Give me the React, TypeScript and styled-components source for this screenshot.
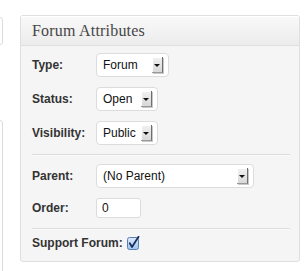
import React from "react";
import styled, { createGlobalStyle } from "styled-components";

const Global = createGlobalStyle`
  html, body { margin: 0; padding: 0; background: #ffffff; }
  body { font-family: "Liberation Sans", Arial, sans-serif; }
`;

const Page = styled.div`
  display: flex;
  align-items: flex-start;
  width: 308px;
  height: 271px;
  overflow: hidden;
`;

const SideCol = styled.div`
  width: 3px;
  display: flex;
  flex-direction: column;
  overflow: hidden;
  flex-shrink: 0;
`;

const SideBox = styled.div<{ $top: number; $height: number }>`
  margin-top: ${(p) => p.$top}px;
  height: ${(p) => p.$height}px;
  margin-left: -10px;
  background: #ffffff;
  border: 1px solid #dcdcdc;
  border-radius: 3px;
`;

const Panel = styled.div`
  margin-top: 15px;
  margin-left: 17px;
  width: 280px;
  box-sizing: border-box;
  border: 1px solid #dfdfdf;
  border-radius: 3px;
  background: #f5f5f5;
  overflow: hidden;
`;

const Header = styled.div`
  height: 29px;
  border-bottom: 1px solid #dfdfdf;
  background: linear-gradient(to bottom, #f9f9f9, #ececec);
  padding-left: 11px;
  font-family: "Liberation Serif", "Times New Roman", serif;
  font-size: 16px;
  letter-spacing: 0.2px;
  line-height: 29px;
  color: #464646;
  box-shadow: inset 0 1px 0 #ffffff;
`;

const Body = styled.div`
  padding: 7px 9px 0 11px;
`;

const Group = styled.div`
  display: flex;
  flex-direction: column;
  gap: 10px;
`;

const Divider = styled.div<{ $before: number; $after: number }>`
  height: 1px;
  background: #dcdcdc;
  margin-top: ${(p) => p.$before}px;
  margin-bottom: ${(p) => p.$after}px;
  box-shadow: 0 1px 0 #fbfbfb;
`;

const Row = styled.div`
  display: flex;
  align-items: center;
`;

const Label = styled.span<{ $width?: number }>`
  width: ${(p) => (p.$width ? `${p.$width}px` : "64px")};
  font-size: 12px;
  font-weight: bold;
  color: #333333;
  flex-shrink: 0;
`;

const SelectBox = styled.div<{ $width: number }>`
  width: ${(p) => p.$width}px;
  height: 24px;
  box-sizing: border-box;
  border: 1px solid #dcdcdc;
  border-radius: 4px;
  background: #ffffff;
  display: flex;
  align-items: center;
  justify-content: space-between;
  padding: 0 5px 0 6px;
  font-size: 12px;
  color: #111111;
`;

const ArrowButton = styled.span`
  width: 11px;
  height: 16px;
  box-sizing: border-box;
  background: linear-gradient(to bottom, #f2f2f2, #d8d8d8);
  border-right: 1px solid #6e6e6e;
  border-bottom: 1px solid #9a9a9a;
  box-shadow: inset 1px 1px 0 #ffffff, 1px 1px 0 #c8c8c8;
  display: flex;
  align-items: center;
  justify-content: center;
  &::after {
    content: "";
    display: block;
    margin-top: 2px;
    border-left: 3px solid transparent;
    border-right: 3px solid transparent;
    border-top: 3px solid #111111;
  }
`;

const TextInput = styled.div`
  width: 45px;
  height: 20px;
  box-sizing: border-box;
  border: 1px solid #dcdcdc;
  border-radius: 3px;
  background: #ffffff;
  padding-left: 5px;
  font-size: 12px;
  line-height: 18px;
  color: #111111;
`;

const SupportRow = styled(Row)`
  margin-top: 6px;
  height: 16px;
  margin-bottom: 10px;
`;

const Select = ({ value, width }: { value: string; width: number }) => (
  <SelectBox $width={width}>
    <span>{value}</span>
    <ArrowButton />
  </SelectBox>
);

const CheckBox = () => (
  <svg width="13" height="14" viewBox="0 0 13 14">
    <defs>
      <linearGradient id="cb" x1="0" y1="0" x2="0" y2="1">
        <stop offset="0" stopColor="#dcebfb" />
        <stop offset="1" stopColor="#9cc3ef" />
      </linearGradient>
    </defs>
    <rect x="0.5" y="1.5" width="11" height="12" rx="2" fill="url(#cb)" stroke="#5a7fb2" />
    <path d="M2.8 7.2 L5 11 L11.5 0.8" fill="none" stroke="#1b2f5e" strokeWidth="1.8" strokeLinecap="round" strokeLinejoin="round" />
  </svg>
);

export default function App() {
  return (
    <Page>
      <Global />
      <SideCol>
        <SideBox $top={17} $height={26} />
        <SideBox $top={75} $height={200} />
      </SideCol>
      <Panel>
        <Header>Forum Attributes</Header>
        <Body>
          <Group>
            <Row>
              <Label>Type:</Label>
              <Select value="Forum" width={73} />
            </Row>
            <Row>
              <Label>Status:</Label>
              <Select value="Open" width={62} />
            </Row>
            <Row>
              <Label>Visibility:</Label>
              <Select value="Public" width={62} />
            </Row>
          </Group>
          <Divider $before={9} $after={9} />
          <Group>
            <Row>
              <Label>Parent:</Label>
              <Select value="(No Parent)" width={158} />
            </Row>
            <Row>
              <Label>Order:</Label>
              <TextInput>0</TextInput>
            </Row>
          </Group>
          <Divider $before={10} $after={0} />
          <SupportRow>
            <Label $width={95}>Support Forum:</Label>
            <CheckBox />
          </SupportRow>
        </Body>
      </Panel>
    </Page>
  );
}
